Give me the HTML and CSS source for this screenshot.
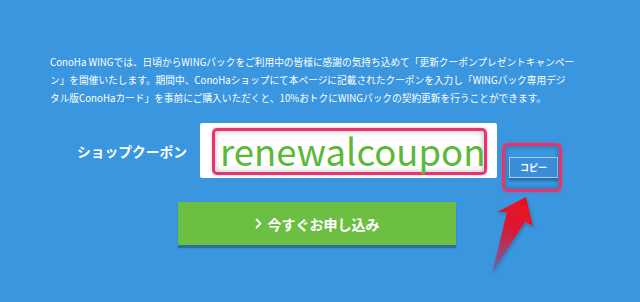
FILE: index.html
```html
<!DOCTYPE html>
<html lang="ja">
<head>
<meta charset="utf-8">
<title>ConoHa WING 更新クーポン</title>
<link rel="stylesheet" href="styles.css">
</head>
<body>
<main class="page">
  <p class="intro">ConoHa WINGでは、日頃からWINGパックをご利用中の皆様に感謝の気持ち込めて「更新クーポンプレゼントキャンペー<br>ン」を開催いたします。期間中、ConoHaショップにて本ページに記載されたクーポンを入力し「WINGパック専用デジ<br>タル版ConoHaカード」を事前にご購入いただくと、10%おトクにWINGパックの契約更新を行うことができます。</p>
  <div class="coupon-row">
    <div class="label">ショップクーポン</div>
    <div class="code-box"><div class="code">renewalcoupon</div></div>
    <div class="copy-wrap">
      <button class="copy-btn" type="button">コピー</button>
      <span class="copy-mark"></span>
    </div>
  </div>
  <a class="apply" href="#"><svg class="chev" width="7" height="11" viewBox="0 0 7 11"><path d="M1 1 L5.5 5.5 L1 10" fill="none" stroke="#fff" stroke-width="1.8"/></svg><span>今すぐお申し込み</span></a>
  <svg class="arrow" width="60" height="95" viewBox="485 190 60 95">
    <defs>
      <linearGradient id="ag" x1="526" y1="197" x2="492" y2="273" gradientUnits="userSpaceOnUse">
        <stop offset="0" stop-color="#ec0f1c"/>
        <stop offset="0.45" stop-color="#d81a33"/>
        <stop offset="1" stop-color="#8a4a8f" stop-opacity="0.6"/>
      </linearGradient>
      <filter id="sh" x="-30%" y="-30%" width="160%" height="160%">
        <feDropShadow dx="1" dy="2" stdDeviation="1.5" flood-color="#1d4f80" flood-opacity="0.45"/>
      </filter>
    </defs>
    <polygon points="526,197 533,226 525,222 492,273 507,212 497,212" fill="url(#ag)" filter="url(#sh)"/>
  </svg>
</main>
</body>
</html>
```

FILE: styles.css
```css
html, body {
  margin: 0;
  padding: 0;
}
body {
  background: #3a96de;
  font-family: "Noto Sans CJK JP", "Noto Sans", sans-serif;
}
.page {
  position: relative;
  width: 640px;
  height: 302px;
  box-sizing: border-box;
  padding: 53px 0 0 50px;
  overflow: hidden;
}
.intro {
  margin: 0;
  color: #fff;
  font-size: 9.7px;
  line-height: 18px;
  white-space: nowrap;
}
.coupon-row {
  display: flex;
  align-items: center;
  margin: 16px 0 0 27px;
}
.label {
  width: 110px;
  margin-right: 13px;
  color: #fff;
  font-size: 13.75px;
  font-weight: 700;
  line-height: 20px;
  white-space: nowrap;
}
.code-box {
  width: 297px;
  height: 55px;
  box-sizing: border-box;
  padding: 5px 10px 3px 12px;
  background: #fff;
  border-radius: 2px;
}
.code {
  height: 47px;
  box-sizing: border-box;
  border: 3px solid #e8346c;
  border-radius: 5px;
  box-shadow: inset 0 0 6px rgba(0, 0, 0, 0.28), 0 0 3px rgba(232, 52, 108, 0.4);
  padding-left: 5px;
  color: #5cb83b;
  font-size: 36.5px;
  line-height: 39px;
  white-space: nowrap;
}
.copy-wrap {
  position: relative;
  align-self: flex-end;
  margin-left: 12px;
  display: flex;
}
.copy-btn {
  width: 49px;
  height: 21px;
  box-sizing: border-box;
  padding: 0;
  border: 1px solid #a3cff1;
  background: #3a8ed7;
  color: #fff;
  font-family: "Noto Sans CJK JP", sans-serif;
  font-size: 9px;
  font-weight: 700;
  line-height: 19px;
  box-shadow: 0 3px 2px rgba(20, 60, 110, 0.45);
}
.copy-mark {
  position: absolute;
  left: -7px;
  top: -14px;
  width: 60px;
  height: 49px;
  box-sizing: border-box;
  border: 3px solid #e8346c;
  border-radius: 6px;
  box-shadow: inset 0 0 5px rgba(0, 0, 0, 0.3), 0 0 3px rgba(232, 52, 108, 0.5);
}
.apply {
  display: flex;
  align-items: center;
  justify-content: center;
  gap: 6px;
  width: 278px;
  height: 43px;
  margin: 24px 0 0 128px;
  background: #6cbf43;
  box-shadow: 0 3px 1px rgba(30, 80, 110, 0.55);
  color: #fff;
  font-size: 14px;
  font-weight: 700;
  text-decoration: none;
}
.chev {
  display: block;
}
.arrow {
  position: absolute;
  left: 485px;
  top: 190px;
}
```
